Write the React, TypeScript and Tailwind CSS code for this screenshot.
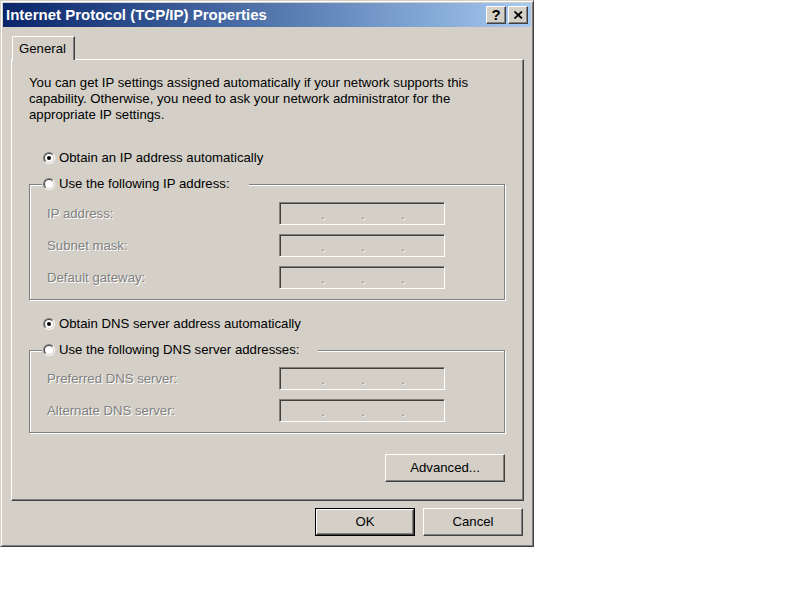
import React from "react";

const font = "font-['Liberation_Sans',Arial,sans-serif]";

const Radio = ({ checked }: { checked?: boolean }) => (
  <div className="w-[12px] h-[12px] rounded-full border border-t-[#808080] border-l-[#808080] border-b-white border-r-white">
    <div className="w-full h-full rounded-full border border-t-[#404040] border-l-[#404040] border-b-[#d4d0c8] border-r-[#d4d0c8] bg-white flex items-center justify-center">
      {checked && <div className="w-[4px] h-[4px] rounded-full bg-black" />}
    </div>
  </div>
);

const RadioRow = ({ label, checked }: { label: string; checked?: boolean }) => (
  <div className="h-[16px] flex items-center">
    <div className="ml-[1px]">
      <Radio checked={checked} />
    </div>
    <span className="ml-[4px] text-black">{label}</span>
  </div>
);

const IpBox = () => (
  <div className="w-[166px] h-[23px] border border-t-[#808080] border-l-[#808080] border-b-white border-r-white shadow-[inset_1px_1px_0_#404040,inset_-1px_-1px_0_#d4d0c8] bg-[#d4d0c8] flex items-center pl-[41px] pt-[3px] text-[#808080] [text-shadow:1px_1px_0_#fff]">
    <span className="w-[40px]">.</span>
    <span className="w-[40px]">.</span>
    <span className="w-[40px]">.</span>
  </div>
);

const FieldRow = ({ label }: { label: string }) => (
  <div className="h-[23px] flex items-center pl-[17px]">
    <span className="w-[232px] text-[#808080] [text-shadow:1px_1px_0_#fff]">{label}</span>
    <IpBox />
  </div>
);

const GroupBox = ({ legend, fields, pt }: { legend: string; fields: string[]; pt: string }) => (
  <div className={`relative w-[476px] border border-[#808080] shadow-[inset_1px_1px_0_#fff,1px_1px_0_#fff] pb-[10px] flex flex-col gap-[9px] ${pt}`}>
    <div className="absolute left-[12px] -top-[9px] bg-[#d4d0c8] pr-[19px]">
      <RadioRow label={legend} />
    </div>
    {fields.map((f) => (
      <FieldRow key={f} label={f} />
    ))}
  </div>
);

const Button = ({ children, isDefault, className }: { children: React.ReactNode; isDefault?: boolean; className?: string }) => (
  <div className={`${isDefault ? "border border-black" : ""} ${className ?? ""}`}>
    <div className="w-full h-full border border-t-white border-l-white border-b-[#404040] border-r-[#404040] shadow-[inset_-1px_-1px_0_#808080] flex items-center justify-center text-black">
      {children}
    </div>
  </div>
);

export default function App() {
  return (
    <div className={`w-[800px] h-[600px] bg-white text-[13.2px] leading-[16px] ${font}`}>
      <div className="w-[534px] h-[547px] bg-[#d4d0c8] border border-t-[#d4d0c8] border-l-[#d4d0c8] border-b-[#404040] border-r-[#404040] shadow-[inset_1px_1px_0_#fff,inset_-1px_-1px_0_#808080] p-[2px] flex flex-col">
        {/* title bar */}
        <div className="h-[24px] bg-gradient-to-r from-[#0a246a] to-[#a6caf0] flex items-center pl-[3px] pr-[3px]">
          <span className="text-white font-bold text-[15px]">Internet Protocol (TCP/IP) Properties</span>
          <div className="ml-auto flex gap-[2px]">
            <div className="w-[20px] h-[18px] bg-[#d4d0c8] border border-t-white border-l-white border-b-[#404040] border-r-[#404040] shadow-[inset_-1px_-1px_0_#808080] flex items-center justify-center font-bold text-[15px] text-black">
              ?
            </div>
            <div className="w-[20px] h-[18px] bg-[#d4d0c8] border border-t-white border-l-white border-b-[#404040] border-r-[#404040] shadow-[inset_-1px_-1px_0_#808080] flex items-center justify-center">
              <svg width="9" height="8" viewBox="0 0 9 8">
                <path d="M0.5 0.5 L8 7.5 M8 0.5 L0.5 7.5" stroke="#000" strokeWidth="1.8" />
              </svg>
            </div>
          </div>
        </div>

        {/* tabs */}
        <div className="mt-[9px] ml-[8px] flex">
          <div className="relative z-10 ml-[1px] w-[63px] h-[24px] -mb-[1px] bg-[#d4d0c8] border-t border-l border-white rounded-tl-[2px] border-r border-r-[#404040] shadow-[inset_-1px_0_0_#808080] pl-[6px] pt-[4px] text-black">
            General
          </div>
        </div>

        <div className="ml-[8px] w-[513px] h-[442px] border border-t-white border-l-white border-b-[#404040] border-r-[#404040] shadow-[inset_-1px_-1px_0_#808080] pl-[17px] pt-[15px] flex flex-col">
          <p className="text-black">
            You can get IP settings assigned automatically if your network supports this
            <br />
            capability. Otherwise, you need to ask your network administrator for the
            <br />
            appropriate IP settings.
          </p>

          <div className="mt-[27px] pl-[13px]">
            <RadioRow label="Obtain an IP address automatically" checked />
          </div>

          <div className="mt-[18px]">
            <GroupBox
              legend="Use the following IP address:"
              fields={["IP address:", "Subnet mask:", "Default gateway:"]}
              pt="pt-[17px]"
            />
          </div>

          <div className="mt-[16px] pl-[13px]">
            <RadioRow label="Obtain DNS server address automatically" checked />
          </div>

          <div className="mt-[18px]">
            <GroupBox
              legend="Use the following DNS server addresses:"
              fields={["Preferred DNS server:", "Alternate DNS server:"]}
              pt="pt-[16px]"
            />
          </div>

          <div className="w-[476px] flex justify-end mt-[21px]">
            <Button className="w-[120px] h-[28px]">Advanced...</Button>
          </div>
        </div>

        <div className="w-[520px] flex justify-end gap-[8px] mt-[7px]">
          <Button isDefault className="w-[100px] h-[28px]">OK</Button>
          <Button className="w-[100px] h-[28px]">Cancel</Button>
        </div>
      </div>
    </div>
  );
}
